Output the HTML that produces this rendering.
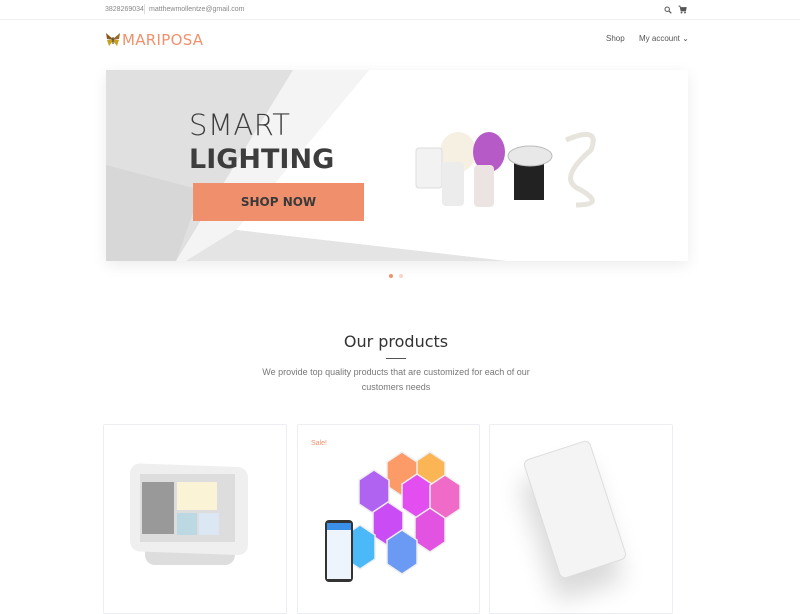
<!DOCTYPE html>
<html><head><meta charset="utf-8"><style>
*{margin:0;padding:0;box-sizing:border-box}
body{width:800px;height:600px;overflow:hidden;background:#fff;font-family:"Liberation Sans",sans-serif;position:relative}
.a{position:absolute}
</style></head><body>
<div class="a" style="left:0;top:0;width:800px;height:20px;border-bottom:1px solid #eef0f4"></div>
<div class="a" style="left:105px;top:5px;font-size:7px;color:#888;line-height:9px">3828269034</div>
<div class="a" style="left:144px;top:4px;width:1px;height:10px;background:#ddd"></div>
<div class="a" style="left:149px;top:5px;font-size:7px;color:#888;line-height:9px">matthewmollentze@gmail.com</div>
<svg class="a" style="left:664px;top:6px" width="8" height="8" viewBox="0 0 8 8"><circle cx="3.2" cy="3.2" r="2.2" fill="none" stroke="#555" stroke-width="1"/><path d="M5 5L7.3 7.3" stroke="#555" stroke-width="1.2"/></svg>
<svg class="a" style="left:678px;top:5px" width="9" height="9" viewBox="0 0 9 9"><path d="M0.5 1H2L3 6H7.5L8.3 2.5H2.4" fill="#555" stroke="#555" stroke-width="0.8"/><circle cx="3.5" cy="7.6" r="0.9" fill="#555"/><circle cx="7" cy="7.6" r="0.9" fill="#555"/></svg>
<svg class="a" style="left:105px;top:32px" width="16" height="15" viewBox="0 0 16 15"><path d="M8 7L1 1 2 7 8 8Z" fill="#8a5a1a"/><path d="M8 7L15 1 14 7 8 8Z" fill="#9a6a20"/><path d="M8 8L2 8 4 14 8 9Z" fill="#c8a020"/><path d="M8 8L14 8 12 14 8 9Z" fill="#c8a020"/><rect x="7.5" y="5" width="1" height="7" fill="#333"/></svg>
<div class="a" style="left:122px;top:31px;font-size:15px;color:#f0916c;letter-spacing:0.3px;font-family:'DejaVu Sans',sans-serif">MARIPOSA</div>
<div class="a" style="left:606px;top:34px;font-size:8px;color:#555">Shop</div>
<div class="a" style="left:639px;top:34px;font-size:8px;color:#555">My account ⌄</div>
<div class="a" style="left:106px;top:70px;width:582px;height:191px;background:#e0e0e0;box-shadow:0 4px 14px rgba(0,0,0,0.08);overflow:hidden">
<svg width="582" height="191" style="position:absolute;left:0;top:0">
<polygon points="0,95 95,120 70,191 0,191" fill="#d7d7d7"/>
<polygon points="187,0 263,0 130,160 80,191 70,191" fill="#f4f4f4"/>
<polygon points="263,0 582,0 582,191 400,191 130,160" fill="#fff"/>
<polygon points="130,160 400,191 80,191" fill="#e4e4e4"/></svg>
<div class="a" style="left:83px;top:38px;font-size:29px;color:#3d3d3d;letter-spacing:0.5px;font-family:'DejaVu Sans',sans-serif;font-weight:300">SMART</div>
<div class="a" style="left:83px;top:74px;font-size:27px;color:#3d3d3d;font-weight:bold;font-family:'DejaVu Sans',sans-serif">LIGHTING</div>
<div class="a" style="left:87px;top:113px;width:171px;height:38px;background:#ef8f6c;color:#3a3a3a;font-size:12px;font-weight:bold;text-align:center;line-height:38px;font-family:'DejaVu Sans',sans-serif">SHOP NOW</div>
<svg class="a" style="left:300px;top:50px" width="210" height="100" viewBox="0 0 210 100">
<ellipse cx="52" cy="32" rx="18" ry="20" fill="#f6f0e2"/><ellipse cx="83" cy="32" rx="16" ry="20" fill="#b65ac8"/>
<rect x="10" y="28" width="26" height="40" rx="3" fill="#f2f2f2" stroke="#ddd"/><rect x="36" y="42" width="22" height="44" rx="4" fill="#ececec"/><rect x="68" y="45" width="20" height="42" rx="4" fill="#ece4e2"/>
<rect x="108" y="35" width="30" height="45" fill="#222"/><ellipse cx="124" cy="36" rx="22" ry="10" fill="#e8e8e8" stroke="#bbb"/>
<path d="M160 20 Q195 5 185 30 Q150 60 175 70 Q200 85 170 85" stroke="#e6e4dc" stroke-width="5" fill="none"/></svg>
</div>
<div class="a" style="left:389px;top:274px;width:4px;height:4px;border-radius:50%;background:#f0916c"></div>
<div class="a" style="left:399px;top:274px;width:4px;height:4px;border-radius:50%;background:#f8d6c8"></div>
<div class="a" style="left:0;top:332px;width:792px;text-align:center;font-size:16px;color:#333;font-family:'DejaVu Sans',sans-serif">Our products</div>
<div class="a" style="left:386px;top:358px;width:20px;height:1px;background:#555"></div>
<div class="a" style="left:256px;top:365px;width:280px;text-align:center;font-size:9px;line-height:15px;color:#777">We provide top quality products that are customized for each of our customers needs</div>
<div class="a" style="left:103px;top:424px;width:184px;height:190px;border:1px solid #eceef2;border-radius:2px"></div>
<div class="a" style="left:297px;top:424px;width:183px;height:190px;border:1px solid #eceef2;border-radius:2px"></div>
<div class="a" style="left:489px;top:424px;width:184px;height:190px;border:1px solid #eceef2;border-radius:2px"></div>
<svg class="a" style="left:125px;top:460px" width="125" height="110"><rect x="20" y="75" width="90" height="30" rx="10" fill="#ddd"/><rect x="5" y="3" width="118" height="88" rx="10" fill="#efefef" transform="skewY(2)"/><rect x="15" y="14" width="95" height="68" fill="#ddd"/><rect x="17" y="22" width="32" height="52" fill="#999"/><rect x="52" y="22" width="40" height="28" fill="#fbf3d6"/><rect x="52" y="53" width="20" height="22" fill="#bcd8e2"/><rect x="74" y="53" width="20" height="22" fill="#dbe8f4"/></svg>
<div class="a" style="left:311px;top:440px;font-size:7px;color:#f0916c">Sale!</div>
<svg class="a" style="left:320px;top:450px" width="145" height="135" viewBox="0 0 145 135">
<g stroke="#eee" stroke-width="1.5">
<polygon points="110,2 125,12 125,36 110,46 95,36 95,12" fill="#fcb555"/><polygon points="82,2 97,12 97,36 82,46 67,36 67,12" fill="#fc9a68"/>
<polygon points="54,20 69,30 69,54 54,64 39,54 39,30" fill="#b062f0"/><polygon points="97,24 112,34 112,58 97,68 82,58 82,34" fill="#e34ef0"/><polygon points="125,25 140,35 140,59 125,69 110,59 110,35" fill="#f06ac8"/>
<polygon points="68,52 83,62 83,86 68,96 53,86 53,62" fill="#ca4cf4"/><polygon points="110,58 125,68 125,92 110,102 95,92 95,68" fill="#e153e0"/>
<polygon points="40,75 55,85 55,109 40,119 25,109 25,85" fill="#4bb8f8"/><polygon points="82,80 97,90 97,114 82,124 67,114 67,90" fill="#6a9af4"/></g>
<rect x="5" y="70" width="28" height="62" rx="4" fill="#333"/><rect x="7" y="73" width="24" height="56" fill="#eef4fb"/><rect x="7" y="73" width="24" height="7" fill="#3a8fe8"/></svg>
<div class="a" style="left:540px;top:447px;width:70px;height:125px;background:#f4f4f4;border:1px solid #ddd;border-radius:6px;transform:rotate(-18deg);box-shadow:-10px 20px 25px rgba(0,0,0,0.15)"></div>
</body></html>
